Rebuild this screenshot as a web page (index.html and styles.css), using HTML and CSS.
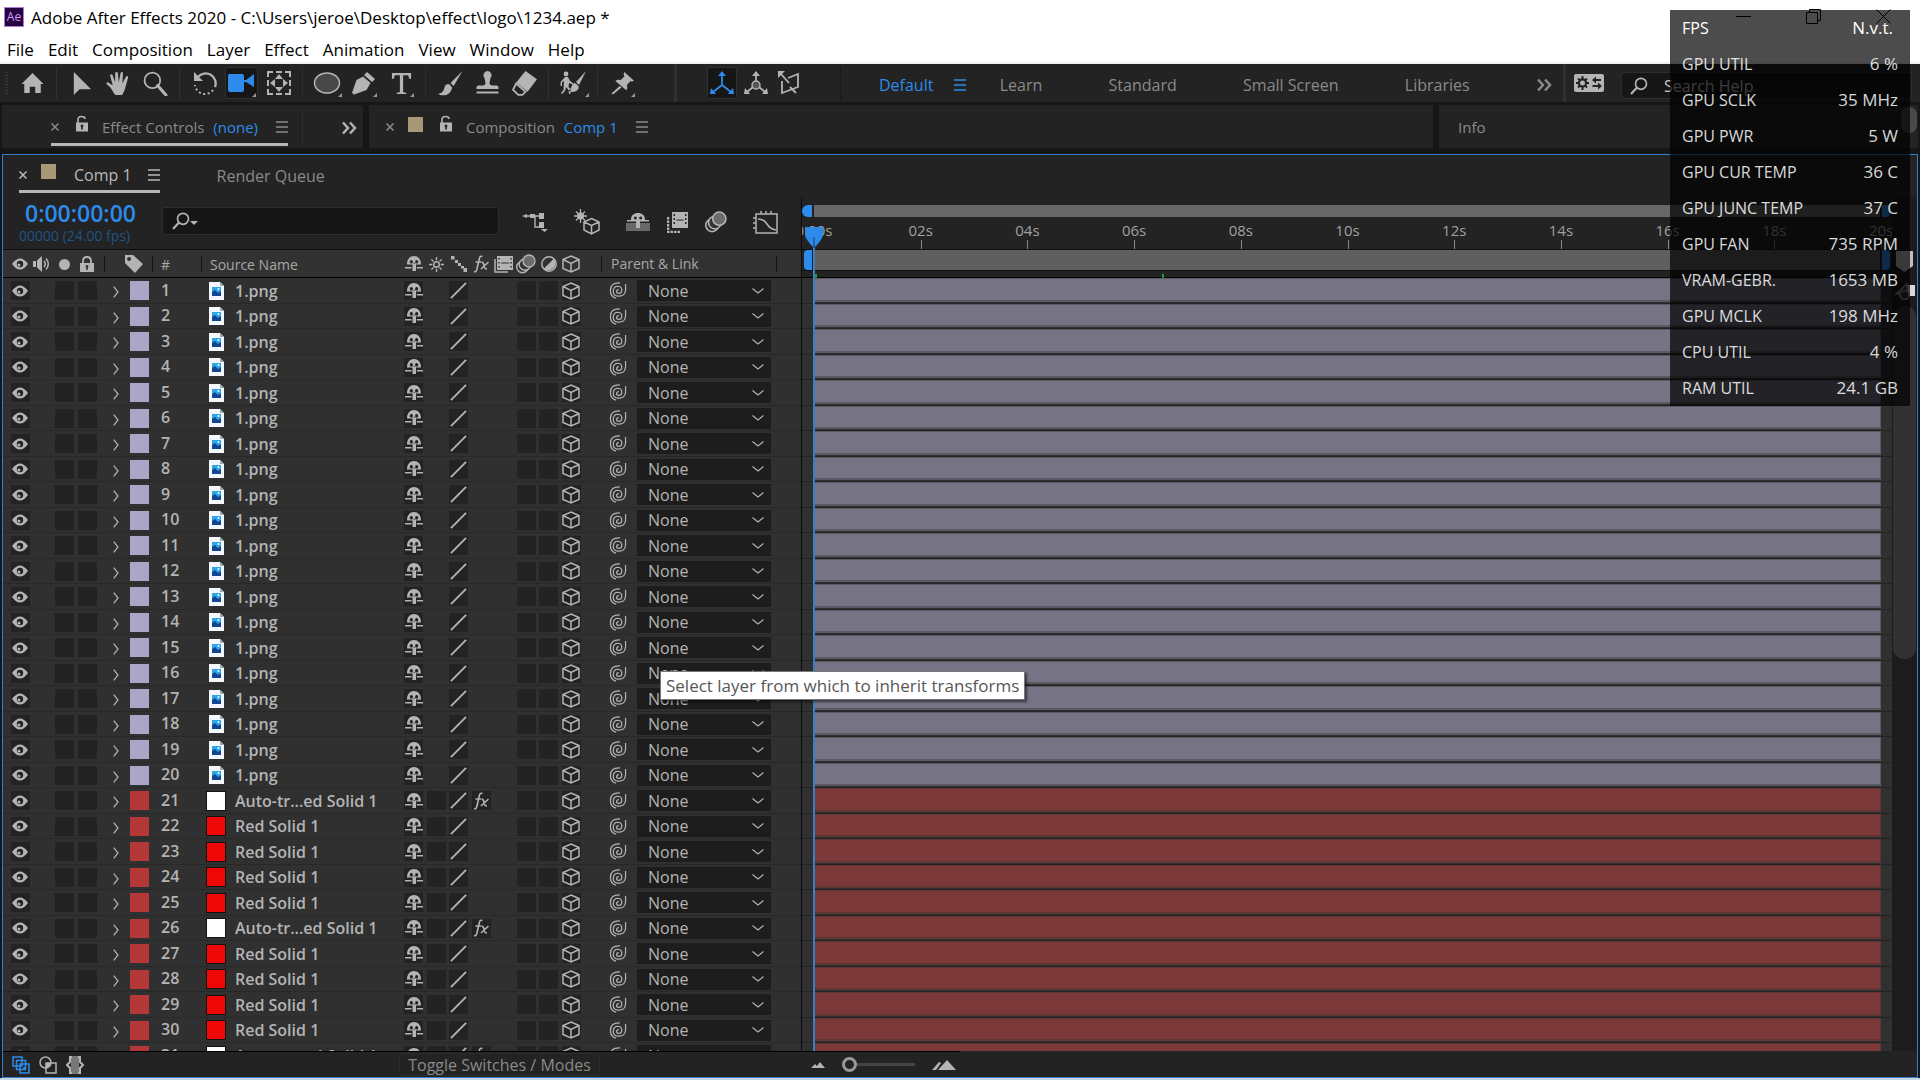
FILE: index.html
```html
<!DOCTYPE html>
<html lang="en">
<head>
    <meta charset="UTF-8">
    <meta name="viewport" content="width=device-width, initial-scale=1.0">
    <title>Adobe After Effects 2020</title>
    <link rel="stylesheet" href="styles.css">
</head>
<body>
    <!-- icon sprite -->
    <svg class="sprite" aria-hidden="true">
        <symbol id="i-home" viewBox="0 0 24 24"><path d="M12 1L0 13h3v10h6v-7h6v7h6V13h3z"/></symbol>
        <symbol id="i-arrow" viewBox="0 0 24 24"><path d="M4 0v24l6-6h12z"/></symbol>
        <symbol id="i-hand" viewBox="0 0 24 24"><path d="M9 23c-2-2-3-5-5-7.500L.6 12.400c-.6-1 .8-2 2-1.200L6.500 14 4 4.500c-.3-1.700 1.800-2 2.300-.6l2.400 7L8.900 2c.2-1.500 2.300-1.500 2.500 0l.8 9 1.800-9c.5-1.500 2.400-1.100 2.300.4L15.700 12l3.400-6.600c.8-1.300 2.600-.4 2.100 1L18.500 16c-.7 3-2 5-3 7z"/></symbol>
        <symbol id="i-zoom" viewBox="0 0 24 24"><circle cx="9" cy="9" r="7.500" fill="none" stroke="currentColor" stroke-width="1.700"/><path d="M14 14l8 9" stroke="currentColor" stroke-width="3" stroke-linecap="round"/></symbol>
        <symbol id="i-rotate" viewBox="0 0 24 24"><path d="M5 6A10 10 0 0 1 22 16" fill="none" stroke="currentColor" stroke-width="2.300"/><path d="M1 1v9h9z"/><path d="M20 19A10 10 0 0 1 2 14" fill="none" stroke="currentColor" stroke-width="2" stroke-dasharray="2 2.500"/></symbol>
        <symbol id="i-camera" viewBox="0 0 28 24"><path d="M2 3h13q2 0 2 2v4h2l8-6v13l-8-5h-2v8q0 2-2 2H3q-2 0-2-2V5q0-2 1-2z"/></symbol>
        <symbol id="i-pan" viewBox="0 0 24 24"><path d="M1 6V1h5M9 1h6M18 1h5v5M23 9v6M23 18v5h-5M15 23H9M6 23H1v-5M1 15V9" fill="none" stroke="currentColor" stroke-width="2"/><path d="M12 3l4 5H8zM12 21l4-5H8zM3 12l5-4v8zM21 12l-5-4v8z"/></symbol>
        <symbol id="i-ellipse" viewBox="0 0 28 24"><ellipse cx="14" cy="12" rx="12.500" ry="10" fill="#484848" stroke="currentColor" stroke-width="1.500"/></symbol>
        <symbol id="i-pen" viewBox="0 0 24 24"><path d="M15 1l8 7-3 3-8-7zM11 5.500l7.500 6.500-4 7L1 24l8-9a2 2 0 1 1 1 1l-8.500 7L0 22 4.500 9z"/></symbol>
        <symbol id="i-type" viewBox="0 0 24 24"><path d="M2 1h20v6h-2l-1-3.500h-5.300V21l3.300.6V23H7v-1.400l3.300-.6V3.500H5L4 7H2z"/></symbol>
        <symbol id="i-brush" viewBox="0 0 24 24"><path d="M23.500 0L12 11.500l3 3zM10.500 12.500c-3 0-4 1.500-4.500 4S3.500 21.500 0 22c3 2 8 2 11-1 2-2 2.500-4.500 2.500-5.500z"/></symbol>
        <symbol id="i-stamp" viewBox="0 0 24 24"><path d="M12 0a4.200 4.200 0 0 1 3 7l-1 5q0 2 3 2.500h4q2 0 2 2V18H1v-1.500q0-2 2-2h4Q10 14 10 12L9 7a4.200 4.200 0 0 1 3-7zM1 20.500h22v2H1z"/></symbol>
        <symbol id="i-eraser" viewBox="0 0 24 24"><path d="M13 0l11 8-9 12L4 11z"/><path d="M4 12l9 8-3 3H6l-5-5z" fill="none" stroke="currentColor" stroke-width="1.700"/></symbol>
        <symbol id="i-roto" viewBox="0 0 26 24"><circle cx="6" cy="3" r="2.400"/><path d="M5 6h3l2 4 3 2v1.500L9 12l-.5 4 2 2v5h-1.500l-.5-4L6 16l-1 4-3 3-1-1 2.500-3 .5-9-2 1.500V15H.6v-4zM26 0L16 11l3 3zM15 12c-3 .5-3 3-4 5-.6 1.600-1.500 2-3 2.500 3 2 7 2 9.500-.5 1-1 1.500-2.500 1-4z"/></symbol>
        <symbol id="i-pin" viewBox="0 0 24 24"><path d="M14 0l10 9-2 1-2-.3-3.500 4c1 2 .5 4-.5 5.300L4.500 9.500C6.500 8 8.500 8 10 8.500l4-4-.8-2.500zM9 14.500l2 1.700L2 23.500l-1.500-1z"/></symbol>
        <symbol id="i-axis-local" viewBox="0 0 24 24"><path d="M12 4v10L3 21M12 14l9 7" fill="none" stroke="currentColor" stroke-width="1.800"/><path d="M12 0l4 5H8zM0 23l1-6 5 6zM24 23l-1-6-5 6z"/></symbol>
        <symbol id="i-axis-world" viewBox="0 0 24 24"><path d="M12 4v8M9 16l-6 5M15 16l6 5" fill="none" stroke="currentColor" stroke-width="1.800"/><circle cx="12" cy="14" r="4" fill="#555" stroke="currentColor" stroke-width="1.500"/><path d="M12 0l4 5H8zM0 23l1-6 5 6zM24 23l-1-6-5 6z"/></symbol>
        <symbol id="i-axis-view" viewBox="0 0 24 24"><path d="M4 10v12l16-6V3l-10 4M3 3l8 9M12 16l6 6" fill="none" stroke="currentColor" stroke-width="1.800"/><path d="M0 0h7L0 7z"/></symbol>
        <symbol id="i-burger" viewBox="0 0 12 12"><path d="M0 1h12M0 6h12M0 11h12" stroke="currentColor" stroke-width="1.500"/></symbol>
        <symbol id="i-more" viewBox="0 0 16 14"><path d="M2 1.500l5 5.500-5 5.500M9 1.500l5 5.500-5 5.500" fill="none" stroke="currentColor" stroke-width="2.500"/></symbol>
        <symbol id="i-settings" viewBox="0 0 30 18"><rect width="30" height="18" rx="2"/><circle cx="8.500" cy="9" r="3.600" fill="none" stroke="#232323" stroke-width="2.200"/><path d="M8.500 2v3M8.500 13v3M2 9h3M12 9h3M4 4.500l2 2M11 11.500l2 2M13 4.500l-2 2M6 11.500l-2 2" stroke="#232323" stroke-width="2"/><path d="M20 6h7M18.500 12h7" stroke="#232323" stroke-width="2"/><path d="M22 2.500v7L18 6zM24 8.500v7l4-3.500z" fill="#232323"/></symbol>
        <symbol id="i-search" viewBox="0 0 18 18"><circle cx="11" cy="6.800" r="5.500" fill="none" stroke="currentColor" stroke-width="1.700"/><path d="M7 10.500L1 17" stroke="currentColor" stroke-width="2.200"/></symbol>
        <symbol id="i-close" viewBox="0 0 8 8"><path d="M.5.5l7 7M7.500.5l-7 7" stroke="currentColor" stroke-width="1.500"/></symbol>
        <symbol id="i-unlock" viewBox="0 0 14 16"><path d="M3 8V4q0-3 3.500-3T10 3.500" fill="none" stroke="currentColor" stroke-width="1.600"/><path fill-rule="evenodd" d="M1 7h12v9H1zM7 9a1.500 1.500 0 0 0-.8 2.700V14h1.600v-2.300A1.500 1.500 0 0 0 7 9z"/></symbol>
        <symbol id="i-lock" viewBox="0 0 14 16"><path d="M3 8V5q0-4 4-4t4 4v3" fill="none" stroke="currentColor" stroke-width="1.800"/><path fill-rule="evenodd" d="M0 7h14v9H0zM7 9a1.500 1.500 0 0 0-.8 2.700V14h1.600v-2.300A1.500 1.500 0 0 0 7 9z"/></symbol>
        <symbol id="i-eye" viewBox="0 0 16 12"><path d="M0 6q8-11 16 0-8 11-16 0z"/><circle cx="8" cy="6" r="3.200" fill="#232323"/><circle cx="7" cy="7" r="1.500"/></symbol>
        <symbol id="i-audio" viewBox="0 0 18 16"><path d="M0 5h3v6H0zM4 4.500L9 0v16l-5-4.500z"/><path d="M11 5q2.500 3 0 6M13 2.500q4.500 5.500 0 11" fill="none" stroke="currentColor" stroke-width="1.500"/></symbol>
        <symbol id="i-tag" viewBox="0 0 18 18"><path fill-rule="evenodd" d="M0 0h8l10 9-8 9L0 8zM4 2a2 2 0 1 0 .1 0z"/></symbol>
        <symbol id="i-shy" viewBox="0 0 18 16"><path fill-rule="evenodd" d="M2 8.500C2 3 5 0 9 0s7 3 7 8.500h-5V15H7.500V8.500zM6.300 4a1.600 1.800 0 1 0 .1 0zM11.600 4a1.600 1.800 0 1 0 .1 0zM8.500 8l.7-1.500.7 1.500z"/><path d="M0 11.700h6.500M11.800 11.700H18" stroke="currentColor" stroke-width="1.600"/></symbol>
        <symbol id="i-sun" viewBox="0 0 16 16"><circle cx="8" cy="8" r="3" fill="none" stroke="currentColor" stroke-width="1.500"/><path d="M8 0v3.500M8 12.500V16M0 8h3.500M12.500 8H16M2.500 2.500l2.300 2.300M11.200 11.200l2.300 2.300M13.500 2.500l-2.300 2.300M4.800 11.200l-2.300 2.300" stroke="currentColor" stroke-width="1.400"/></symbol>
        <symbol id="i-steps" viewBox="0 0 16 16"><path d="M0 0h3.500v3.500H0zM4 4h3v3H4zM7 7h3v3H7zM10 10h3v2.500h-3zM12.500 12H16v4h-3.500z"/></symbol>
        <symbol id="i-fx" viewBox="0 0 17 18"><path d="M1 16.500q2 1 2.800-2L6.500 3Q7.200.5 9.500 1.500M2.500 7h5.500M8.500 7q2 0 2.500 3.500t3 3.500M15.500 7l-7.500 7" fill="none" stroke="currentColor" stroke-width="1.600"/></symbol>
        <symbol id="i-film" viewBox="0 0 19 17"><path d="M1 3v13h13" fill="none" stroke="currentColor" stroke-width="1.500"/><path fill-rule="evenodd" d="M3 0h16v14H3zM4.200 2v1.500h1.500V2zM4.200 6v1.500h1.500V6zM4.200 10v1.500h1.500V10zM16.300 2v1.500h1.500V2zM16.300 6v1.500h1.500V6zM16.300 10v1.500h1.500V10zM7 6.500v1h8v-1z"/></symbol>
        <symbol id="i-blur" viewBox="0 0 20 20"><g stroke="currentColor" stroke-width="1.400" fill="#323232"><circle cx="6.500" cy="13" r="5.800"/><circle cx="9" cy="10.500" r="5.800"/><circle cx="13" cy="7" r="6" fill="#6c6c6c"/></g></symbol>
        <symbol id="i-adjust" viewBox="0 0 16 16"><circle cx="8" cy="8" r="7.200" fill="none" stroke="currentColor" stroke-width="1.500"/><path d="M13 2.500L2.500 13A7.500 7.500 0 0 0 13 2.500z"/></symbol>
        <symbol id="i-cube" viewBox="0 0 18 18"><path d="M9 1l8 3.500v9L9 17l-8-3.500v-9zM1 4.500L9 8.500l8-4M9 8.500V17" fill="none" stroke="currentColor" stroke-width="1.500"/></symbol>
        <symbol id="i-quality" viewBox="0 0 18 18"><path d="M1 17L17 1" stroke="currentColor" stroke-width="2"/></symbol>
        <symbol id="i-twirl" viewBox="0 0 6 12"><path d="M.7.7L5 6 .7 11.300" fill="none" stroke="currentColor" stroke-width="1.200"/></symbol>
        <symbol id="i-down" viewBox="0 0 12 6"><path d="M.5.5L6 5 11.500.5" fill="none" stroke="currentColor" stroke-width="1.100"/></symbol>
        <symbol id="i-pickwhip" viewBox="0 0 18 18"><path d="M10 8Q7.500 8 7.500 10t2.500 2q3 0 3-3.500T9 4.500Q4 4.500 4 10q0 4.500 5 5 7 .5 8-6V2M11 1Q1 .5 1 9q0 7 6 8" fill="none" stroke="currentColor" stroke-width="1.300"/></symbol>
        <symbol id="i-png" viewBox="0 0 15 18"><path d="M0 0h11l4 4v14H0z" fill="#f4f8fc"/><path d="M11 0v4h4z" fill="#9aa"/><path d="M3 5h9v9H3z" fill="#2da5e8"/><path d="M3 10l3-2 3 3 3-2v5H3z" fill="#12468e"/><circle cx="9.500" cy="7" r="1" fill="#fff"/></symbol>
        <symbol id="i-flow" viewBox="0 0 26 20"><path d="M2 4h20M13 4v11h4" fill="none" stroke="currentColor" stroke-width="1.400"/><path d="M0 4l5-2v4zM8 2h5v4H8zM17 1h5v6h-5zM17 10h5v6h-5zM19 17h7l-3.500 3z"/></symbol>
        <symbol id="i-draft" viewBox="0 0 26 26"><circle cx="6.500" cy="7" r="3.500"/><path d="M6.500 0v14M0 7h13M2 2.500l9 9M11 2.500l-9 9" stroke="currentColor" stroke-width="1.300"/><path d="M17.500 9.500l7.500 3.500v8l-7.500 4-7.500-4v-8z" fill="#232323"/><path d="M17.500 9.500l7.500 3.500v8l-7.500 4-7.500-4v-8zM10 13l7.500 3.500L25 13M17.500 16.500V25" fill="none" stroke="currentColor" stroke-width="1.500"/></symbol>
        <symbol id="i-hideshy" viewBox="0 0 24 20"><path d="M0 11h24v8H0z" fill="#686868"/><path fill-rule="evenodd" d="M5 8C5 3 8 1 12 1s7 2 7 7h4v1.600h-9V16h-4V9.600H1V8zM9.300 4.500a1.500 1.500 0 1 0 .1 0zM14.600 4.500a1.500 1.500 0 1 0 .1 0z"/></symbol>
        <symbol id="i-blend" viewBox="0 0 21 21"><path d="M1 5v15h13" fill="none" stroke="currentColor" stroke-width="2.500" stroke-dasharray="2.500 1"/><path fill-rule="evenodd" d="M5 0h16v16H5zM6.500 2v2H8V2zM6.500 6v2H8V6zM6.500 10v2H8v-2zM18 2v2h1.500V2zM18 6v2h1.500V6zM18 10v2h1.500v-2zM9.500 7.500v1h7v-1z"/></symbol>
        <symbol id="i-graph" viewBox="0 0 25 23"><path d="M3 3h21v19H3zM0 7h3M0 12h3M0 17h3M8 0v3M13 0v3M18 0v3M5 8q6 0 9 5t9 6" fill="none" stroke="currentColor" stroke-width="1.500"/></symbol>
        <symbol id="i-panes" viewBox="0 0 18 18"><path d="M1 1h9v9H1zM4.500 4.500h9v9h-9zM8 8h9v9H8z" fill="#232323" stroke="currentColor" stroke-width="1.500"/><circle cx="12.500" cy="12.500" r="1.400"/></symbol>
        <symbol id="i-modes" viewBox="0 0 18 18"><circle cx="6.500" cy="6.500" r="5.500" fill="none" stroke="currentColor" stroke-width="1.500"/><path d="M7 7h10v10H7z" fill="none" stroke="currentColor" stroke-width="1.500"/><path d="M7 7h5q-.5 4-5 5z"/></symbol>
        <symbol id="i-inout" viewBox="0 0 18 18"><path d="M5 0h8v18H5z" fill="#787878"/><path d="M6 1H4v5L1 9l3 3v5h2M12 1h2v5l3 3-3 3v5h-2" fill="none" stroke="currentColor" stroke-width="2"/></symbol>
        <symbol id="i-hills-sm" viewBox="0 0 14 6"><path d="M0 6l4-4 2 2 3-4 5 6z"/></symbol>
        <symbol id="i-hills-lg" viewBox="0 0 24 10"><path d="M0 10l7-8 2 1-5 7zM6 10l9-10 9 10z"/></symbol>
    </svg>

    <header class="titlebar">
        <div class="title">
            <span class="app-logo">Ae</span>
            <span>Adobe After Effects 2020 - C:\Users\jeroe\Desktop\effect\logo\1234.aep *</span>
        </div>
        <div class="window-controls">
            <button aria-label="Minimize"><svg width="15" height="15" viewBox="0 0 15 15"><path d="M0 7.500h15" stroke="#000"/></svg></button>
            <button aria-label="Restore"><svg width="15" height="15" viewBox="0 0 15 15"><path d="M.5 3.500h11v11H.5zM3.500 3.500v-3h11v11h-3" fill="none" stroke="#000"/></svg></button>
            <button aria-label="Close"><svg width="15" height="15" viewBox="0 0 15 15"><path d="M.5.5l14 14M14.500.5l-14 14" stroke="#000"/></svg></button>
        </div>
    </header>

    <nav class="menubar">
        <a href="#">File</a><a href="#">Edit</a><a href="#">Composition</a><a href="#">Layer</a><a href="#">Effect</a><a href="#">Animation</a><a href="#">View</a><a href="#">Window</a><a href="#">Help</a>
    </nav>

    <main class="app">
        <div class="toolbar">
            <span class="grip"></span>
            <button class="tool" aria-label="Home"><svg width="25" height="22"><use href="#i-home"/></svg></button>
            <span class="sep"></span>
            <button class="tool" aria-label="Selection"><svg width="23" height="25"><use href="#i-arrow"/></svg></button>
            <button class="tool" aria-label="Hand"><svg width="25" height="25"><use href="#i-hand"/></svg></button>
            <button class="tool" aria-label="Zoom"><svg width="25" height="25"><use href="#i-zoom"/></svg></button>
            <span class="sep"></span>
            <button class="tool" aria-label="Rotation"><svg width="24" height="24"><use href="#i-rotate"/></svg></button>
            <button class="tool flyout active" aria-label="Camera"><svg width="28" height="24"><use href="#i-camera"/></svg></button>
            <button class="tool" aria-label="Pan behind"><svg width="24" height="24"><use href="#i-pan"/></svg></button>
            <span class="sep"></span>
            <button class="tool flyout" aria-label="Ellipse"><svg width="28" height="24"><use href="#i-ellipse"/></svg></button>
            <button class="tool flyout" aria-label="Pen"><svg width="24" height="24"><use href="#i-pen"/></svg></button>
            <button class="tool flyout" aria-label="Type"><svg width="23" height="23"><use href="#i-type"/></svg></button>
            <span class="sep"></span>
            <button class="tool" aria-label="Brush"><svg width="25" height="25"><use href="#i-brush"/></svg></button>
            <button class="tool" aria-label="Clone stamp"><svg width="25" height="24"><use href="#i-stamp"/></svg></button>
            <button class="tool" aria-label="Eraser"><svg width="25" height="25"><use href="#i-eraser"/></svg></button>
            <span class="sep"></span>
            <button class="tool flyout" aria-label="Roto brush"><svg width="30" height="24"><use href="#i-roto"/></svg></button>
            <span class="sep"></span>
            <button class="tool flyout" aria-label="Puppet pin"><svg width="23" height="23"><use href="#i-pin"/></svg></button>
            <span class="sep-wide after-tools"></span>
            <div class="axes">
                <button class="tool active" aria-label="Local axis"><svg width="24" height="24"><use href="#i-axis-local"/></svg></button>
                <button class="tool" aria-label="World axis"><svg width="24" height="24"><use href="#i-axis-world"/></svg></button>
                <button class="tool" aria-label="View axis"><svg width="24" height="24"><use href="#i-axis-view"/></svg></button>
            </div>
            <nav class="workspaces">
                <a href="#" class="current">Default <svg width="12" height="12"><use href="#i-burger"/></svg></a>
                <a href="#">Learn</a>
                <a href="#">Standard</a>
                <a href="#">Small Screen</a>
                <a href="#">Libraries</a>
                <button class="icon-btn" aria-label="More workspaces"><svg width="16" height="14"><use href="#i-more"/></svg></button>
            </nav>
            <span class="sep-wide"></span>
            <button class="icon-btn sync" aria-label="Workspace settings"><svg width="30" height="18"><use href="#i-settings"/></svg></button>
            <label class="search search-help">
                <svg width="18" height="18"><use href="#i-search"/></svg>
                <input type="text" placeholder="Search Help" aria-label="Search Help">
            </label>
        </div>

        <div class="tabstrip">
            <section class="tabs tabs-effects">
                <div class="tab open">
                    <button class="icon-btn" aria-label="Close"><svg width="8" height="8"><use href="#i-close"/></svg></button>
                    <svg class="lock" width="14" height="17"><use href="#i-unlock"/></svg>
                    <span class="tab-name">Effect Controls <b>(none)</b></span>
                    <svg width="12" height="12"><use href="#i-burger"/></svg>
                </div>
                <button class="icon-btn more" aria-label="More tabs"><svg width="16" height="14"><use href="#i-more"/></svg></button>
            </section>
            <section class="tabs tabs-comp">
                <button class="icon-btn" aria-label="Close"><svg width="8" height="8"><use href="#i-close"/></svg></button>
                <span class="swatch"></span>
                <svg class="lock" width="14" height="17"><use href="#i-unlock"/></svg>
                <span class="tab-name">Composition <b>Comp 1</b></span>
                <svg width="12" height="12"><use href="#i-burger"/></svg>
            </section>
            <section class="tabs tabs-info">
                <span>Info</span>
                <span class="info-thumb"></span>
            </section>
        </div>

        <section class="timeline">
            <div class="timeline-tabs">
                <div class="tab open">
                    <button class="icon-btn" aria-label="Close"><svg width="8" height="8"><use href="#i-close"/></svg></button>
                    <span class="swatch"></span>
                    <span class="tab-name">Comp 1</span>
                    <svg width="12" height="12"><use href="#i-burger"/></svg>
                </div>
                <a href="#">Render Queue</a>
            </div>

            <div class="timeline-body">
                <div class="layers">
                    <div class="layer-tools">
                        <div class="time">
                            <span class="timecode">0:00:00:00</span>
                            <span class="frames">00000 (24.00 fps)</span>
                        </div>
                        <label class="search layer-search">
                            <svg width="18" height="18"><use href="#i-search"/></svg>
                            <span class="caret"></span>
                            <input type="text" aria-label="Search layers">
                        </label>
                        <div class="comp-buttons">
                            <button class="icon-btn" aria-label="Mini flowchart"><svg width="26" height="20"><use href="#i-flow"/></svg></button>
                            <button class="icon-btn" aria-label="Draft 3D"><svg width="26" height="26"><use href="#i-draft"/></svg></button>
                            <div class="switch-buttons">
                                <button class="icon-btn" aria-label="Hide shy layers"><svg width="24" height="20"><use href="#i-hideshy"/></svg></button>
                                <button class="icon-btn" aria-label="Frame blending"><svg width="21" height="21"><use href="#i-blend"/></svg></button>
                                <button class="icon-btn" aria-label="Motion blur"><svg width="22" height="22"><use href="#i-blur"/></svg></button>
                            </div>
                            <button class="icon-btn" aria-label="Graph editor"><svg width="25" height="23"><use href="#i-graph"/></svg></button>
                        </div>
                    </div>

                    <div class="layer-scroll">
                    <table class="layer-table">
                        <colgroup>
                            <col class="c-switch"><col class="c-switch"><col class="c-switch"><col class="c-lock">
                            <col class="c-twirl"><col class="c-twirl"><col class="c-num"><col class="c-name">
                            <col class="c-odd"><col class="c-switch"><col class="c-odd"><col class="c-switch">
                            <col class="c-odd"><col class="c-switch"><col class="c-odd"><col class="c-switch">
                            <col class="c-parent">
                        </colgroup>
                        <thead>
                            <tr>
                                <th><svg width="16" height="12"><use href="#i-eye"/></svg></th>
                                <th><svg width="18" height="16"><use href="#i-audio"/></svg></th>
                                <th><span class="dot"></span></th>
                                <th class="h-lock"><svg width="14" height="16"><use href="#i-lock"/></svg></th>
                                <th class="h-tag" colspan="2"><svg width="18" height="18"><use href="#i-tag"/></svg></th>
                                <th class="h-num">#</th>
                                <th class="h-name">Source Name</th>
                                <th><svg width="18" height="16"><use href="#i-shy"/></svg></th>
                                <th><svg width="15" height="15"><use href="#i-sun"/></svg></th>
                                <th><svg width="16" height="16"><use href="#i-steps"/></svg></th>
                                <th><svg width="17" height="18"><use href="#i-fx"/></svg></th>
                                <th><svg width="19" height="17"><use href="#i-film"/></svg></th>
                                <th><svg width="20" height="20"><use href="#i-blur"/></svg></th>
                                <th><svg width="16" height="16"><use href="#i-adjust"/></svg></th>
                                <th><svg width="18" height="18"><use href="#i-cube"/></svg></th>
                                <th class="h-parent"><span>Parent &amp; Link</span></th>
                            </tr>
                        </thead>
                        <tbody id="layer-rows"></tbody>
                    </table>
                    </div>
                </div>

                <div class="time-area">
                    <div class="time-head">
                        <div class="navigator"><i></i><span></span><i class="end"></i></div>
                        <div class="ruler" id="ruler"></div>
                        <div class="work-area"><i></i><span></span><i class="end"></i></div>
                        <div class="cache"><i class="cache-start"></i><i></i></div>
                    </div>
                    <div class="tracks" id="tracks"></div>
                    <div class="gutter">
                        <svg width="17" height="21" viewBox="0 0 17 21"><path d="M0 0h17v15l-8.500 6L0 15z" fill="#c0c0c0"/></svg>
                        <svg width="20" height="17" viewBox="0 0 20 17"><path d="M13 2h7v11h-7z" fill="#d8d8d8"/><path d="M1 11L12 1v8zM9 7l3 4" fill="none" stroke="#999" stroke-width="1.500"/><circle cx="9.500" cy="12" r="4.500" fill="#303030" stroke="#999" stroke-width="1.500"/></svg>
                        <span class="scroll-thumb"></span>
                    </div>
                    <div class="playhead"><svg width="18" height="21" viewBox="0 0 18 21"><path d="M0 0h18v8q-1 5-9 13Q1 13 0 8z" fill="#2d8ceb"/><path d="M9 10v11" stroke="#14395f"/></svg></div>
                </div>
            </div>

            <footer class="timeline-footer">
                <div class="pane-buttons">
                    <button class="icon-btn on" aria-label="Layer switches"><svg width="18" height="18"><use href="#i-panes"/></svg></button>
                    <button class="icon-btn" aria-label="Transfer controls"><svg width="18" height="18"><use href="#i-modes"/></svg></button>
                    <button class="icon-btn" aria-label="In and out"><svg width="18" height="18"><use href="#i-inout"/></svg></button>
                </div>
                <button class="toggle-modes">Toggle Switches / Modes</button>
                <div class="time-zoom">
                    <svg width="14" height="6"><use href="#i-hills-sm"/></svg>
                    <input type="range" min="0" max="100" value="0" aria-label="Time zoom">
                    <svg width="24" height="10"><use href="#i-hills-lg"/></svg>
                </div>
            </footer>
        </section>
    </main>

    <div class="tooltip" role="tooltip">Select layer from which to inherit transforms</div>

    <dl class="stats">
        <div><dt>FPS</dt><dd>N.v.t.</dd></div>
        <div><dt>GPU UTIL</dt><dd>6 %</dd></div>
        <div><dt>GPU SCLK</dt><dd>35 MHz</dd></div>
        <div><dt>GPU PWR</dt><dd>5 W</dd></div>
        <div><dt>GPU CUR TEMP</dt><dd>36 C</dd></div>
        <div><dt>GPU JUNC TEMP</dt><dd>37 C</dd></div>
        <div><dt>GPU FAN</dt><dd>735 RPM</dd></div>
        <div><dt>VRAM-GEBR.</dt><dd>1653 MB</dd></div>
        <div><dt>GPU MCLK</dt><dd>198 MHz</dd></div>
        <div><dt>CPU UTIL</dt><dd>4 %</dd></div>
        <div><dt>RAM UTIL</dt><dd>24.1 GB</dd></div>
    </dl>

    <script src="script.js"></script>
</body>
</html>
```
FILE: styles.css
```css
* {
    box-sizing: border-box;
}
body {
    margin: 0;
    height: 100vh;
    display: flex;
    flex-direction: column;
    overflow: hidden;
    background-color: #c9d6e4;
    color: #b4b4b4;
    font-family: "Open Sans", "Noto Sans", sans-serif;
    font-size: 15px;
}
svg {
    display: block;
    fill: currentColor;
    flex: none;
}
a {
    color: inherit;
    text-decoration: none;
}
button {
    padding: 0;
    border: 0;
    background: none;
    color: inherit;
    font: inherit;
}
.sprite {
    position: absolute;
    width: 0;
    height: 0;
}

/* window frame */
.titlebar {
    height: 34px;
    display: flex;
    justify-content: space-between;
    background-color: #fff;
    color: #000;
    font-size: 17px;
}
.title {
    display: flex;
    align-items: center;
    gap: 7px;
    padding-left: 4px;
}
.app-logo {
    width: 20px;
    height: 20px;
    border: 1px solid #b07ad6;
    background-color: #23043f;
    color: #d79bff;
    font-size: 12px;
    line-height: 17px;
    text-align: center;
}
.window-controls {
    display: flex;
    gap: 55px;
    padding: 9px 29px 0 0;
    align-items: flex-start;
}
.menubar {
    height: 30px;
    display: flex;
    gap: 14px;
    padding-left: 7px;
    background-color: #fff;
    border-bottom: 2px solid #f0f0f0;
    color: #000;
    font-size: 17px;
    line-height: 31px;
}
.app {
    flex: 1;
    min-height: 0;
    display: flex;
    flex-direction: column;
    margin-bottom: 2px;
    background-color: #161616;
}

/* tools */
.toolbar {
    height: 38px;
    display: flex;
    align-items: center;
    padding-left: 5px;
    padding-right: 8px;
    background-color: #232323;
}
.grip {
    width: 3px;
    height: 22px;
    margin-right: 6px;
    background: repeating-linear-gradient(#3a3a3a 0 1px, #232323 1px 3px);
}
.tool {
    width: 37px;
    height: 32px;
    display: flex;
    align-items: center;
    justify-content: center;
}
.tool.active {
    width: 33px;
    margin: 0 2px;
    border: 1px solid #303030;
    border-radius: 3px;
    background-color: #161616;
    color: #2d8ceb;
}
.flyout::after {
    content: "";
    width: 0;
    margin: 24px 0 0 -3px;
    border: 2px solid #999;
    border-top-color: transparent;
    border-left-color: transparent;
}
.sep {
    width: 1px;
    height: 32px;
    margin: 0 6px 0 5px;
    background-color: #2f2f2f;
}
.sep-wide {
    width: 3px;
    height: 38px;
    background-color: #303030;
}
.after-tools {
    margin-left: 33px;
}
.axes {
    display: flex;
    margin-left: 28px;
    padding-right: 33px;
    border-right: 1px solid #181818;
}
.axes .tool {
    width: 34px;
}
.axes .active {
    width: 30px;
}
.workspaces {
    flex: 1;
    display: flex;
    align-items: center;
    justify-content: space-between;
    padding: 4px 11px 0 38px;
    color: #8a8a8a;
    font-size: 16px;
}
.workspaces .current {
    display: flex;
    align-items: center;
    gap: 21px;
    margin-right: -33px;
    color: #2d8ceb;
}
.icon-btn {
    display: flex;
    align-items: center;
    justify-content: center;
}
.sync {
    margin: 0 17px 0 8px;
}
.search {
    display: flex;
    align-items: center;
    height: 28px;
    border: 1px solid #2e2e2e;
    border-radius: 3px;
    background-color: #161616;
}
.search input {
    flex: 1;
    min-width: 0;
    padding: 0;
    border: 0;
    background: none;
    color: #b4b4b4;
    font: inherit;
}
.search-help {
    width: 291px;
    height: 27px;
    margin-top: 5px;
    gap: 16px;
    padding-left: 8px;
    font-size: 16px;
}
.search-help input::placeholder {
    color: #c4c4c4;
    opacity: 1;
}

/* docked panel tabs */
.tabstrip {
    display: flex;
    gap: 6px;
    padding: 3px 2px 6px;
    color: #8a8a8a;
}
.tabs {
    height: 43px;
    display: flex;
    align-items: center;
    background-color: #232323;
}
.tabs b {
    margin-left: 5px;
    color: #2d8ceb;
    font-weight: 400;
}
.tab {
    display: flex;
    align-items: center;
}
.tab-name {
    margin-right: 18px;
}
.lock {
    margin: -6px 13px 0 16px;
    color: #b4b4b4;
}
.tabs-effects {
    width: 361px;
    padding: 3px 6px 0 49px;
    justify-content: space-between;
}
.tabs-effects .tab {
    height: 36px;
    border-bottom: 3px solid #b8b8b8;
}
.more {
    height: 36px;
    padding-left: 38px;
    border-left: 1px solid #2f2f2f;
    color: #b4b4b4;
}
.tabs-comp {
    flex: 1;
    padding-left: 17px;
}
.swatch {
    width: 15px;
    height: 15px;
    margin: -4px 0 0 14px;
    background-color: #a89878;
}
.tabs-info {
    width: 479px;
    justify-content: space-between;
    padding: 0 1px 0 19px;
}
.info-thumb {
    width: 16px;
    height: 26px;
    margin-top: -14px;
    border-radius: 8px;
    background-color: #4a4a4a;
}

/* timeline panel */
.timeline {
    flex: 1;
    min-height: 0;
    display: flex;
    flex-direction: column;
    margin: 0 2px;
    border: 1px solid #2f7fcb;
    background-color: #232323;
}
.timeline-tabs {
    height: 42px;
    display: flex;
    align-items: flex-start;
    padding-left: 16px;
    font-size: 16px;
    line-height: 42px;
    color: #8a8a8a;
}
.timeline-tabs .tab {
    height: 38px;
    padding-top: 5px;
    margin-right: 57px;
    border-bottom: 3px solid #b8b8b8;
    color: #b8b8b8;
}
.timeline-tabs .swatch {
    margin-top: -8px;
}
.timeline-tabs .tab-name {
    margin: 0 16px 0 18px;
}
.timeline-body {
    flex: 1;
    min-height: 0;
    display: grid;
    grid-template-columns: 799px 1fr;
}
.layers {
    min-height: 0;
    display: flex;
    flex-direction: column;
    overflow: hidden;
    border-right: 1px solid #0c0c0c;
}
.layer-tools {
    height: 52px;
    flex: none;
    display: flex;
    align-items: flex-start;
}
.time {
    width: 159px;
    display: flex;
    flex-direction: column;
    padding: 3px 0 0 16px;
    color: #1f5488;
    font-size: 14px;
    line-height: 20px;
    white-space: nowrap;
}
.timecode {
    padding-left: 6px;
    color: #2d8ceb;
    font-size: 23px;
    font-weight: 600;
    line-height: 26px;
}
.layer-search {
    width: 337px;
    margin-top: 10px;
    padding-left: 9px;
}
.caret {
    margin-top: 8px;
    border: 4px solid transparent;
    border-top-color: #b4b4b4;
}
.comp-buttons {
    flex: 1;
    height: 50px;
    display: flex;
    align-items: center;
    justify-content: space-between;
    padding: 0 23px;
}
.switch-buttons {
    display: flex;
    align-items: center;
    gap: 17px;
}

/* layer list */
.layer-scroll {
    flex: 1;
    min-height: 0;
    overflow: hidden;
    background-color: #303030;
}
.layer-table {
    width: 100%;
    table-layout: fixed;
    border-collapse: separate;
    border-spacing: 0;
}
.c-switch { width: 22px; }
.c-odd { width: 23px; }
.c-lock { width: 29px; }
.c-twirl { width: 24px; }
.c-num { width: 49px; }
.c-name { width: 201px; }
.layer-table th,
.layer-table td {
    padding: 0;
    vertical-align: middle;
}
.layer-table th {
    height: 29px;
    padding-top: 1px;
    border-top: 1px solid #0c0c0c;
    border-bottom: 1px solid #000;
    background-color: #323232;
    color: #a8a8a8;
    font-size: 14px;
    font-weight: 400;
    text-align: left;
}
.layer-table th svg {
    margin: 0 auto;
    color: #b4b4b4;
}
.layer-table tr > :first-child {
    padding-left: 6px;
}
.layer-table col:first-child {
    width: 28px;
}
.dot {
    display: block;
    width: 11px;
    height: 11px;
    margin: 0 auto;
    border-radius: 50%;
    background-color: #b4b4b4;
}
.layer-table .h-lock {
    padding-right: 6px;
}
.layer-table .h-tag {
    padding-left: 12px;
}
.layer-table .h-tag,
.layer-table .h-num,
.layer-table .h-name {
    background: linear-gradient(#151515, #151515) 0 6px / 1px 16px no-repeat #323232;
}
.layer-table .h-num,
.layer-table .h-name {
    padding-left: 9px;
}
.h-parent span {
    display: block;
    width: 176px;
    height: 16px;
    margin-left: 19px;
    padding-left: 9px;
    border-left: 1px solid #151515;
    border-right: 1px solid #151515;
    line-height: 16px;
}
.layer-table tbody tr {
    height: 26px;
}
.layer-table tbody tr:nth-child(even) {
    height: 25px;
}
.layer-table td {
    border-bottom: 1px solid #282828;
    color: #b4b4b4;
}
.cell {
    width: 19px;
    height: 19px;
    display: flex;
    align-items: center;
    justify-content: center;
    margin: 0 auto;
    background-color: #232323;
}
.cell-lock {
    margin: 0 0 0 3px;
}
.twirl {
    margin: 3px auto 0;
}
.label {
    display: block;
    width: 19px;
    height: 19px;
    margin-left: 2px;
    background-color: #aaa6c8;
}
.label.red {
    background-color: #b53838;
}
.layer-table .num {
    padding: 0 0 2px 9px;
    font-size: 16px;
    font-weight: 600;
    line-height: 20px;
}
.source {
    display: flex;
    align-items: center;
    padding-left: 5px;
    gap: 9px;
    font-size: 16px;
    font-weight: 600;
    line-height: 20px;
    white-space: nowrap;
}
.thumb {
    width: 20px;
    height: 20px;
    display: flex;
    justify-content: center;
    align-items: center;
}
.thumb.solid {
    border: 1px solid #111;
    background-color: #ee0808;
}
.thumb.white {
    background-color: #fff;
}
.link {
    display: flex;
    align-items: center;
    gap: 9px;
    padding-left: 26px;
}
.pick {
    width: 20px;
}
.dropdown {
    width: 134px;
    height: 21px;
    display: grid;
    align-items: center;
    background-color: #1d1d1d;
}
.dropdown select,
.dropdown svg {
    grid-area: 1 / 1;
}
.dropdown select {
    width: 100%;
    height: 21px;
    padding: 0 0 0 11px;
    appearance: none;
    border: 0;
    background: none;
    color: #b4b4b4;
    font: inherit;
    font-size: 16px;
    line-height: 20px;
}
.dropdown svg {
    justify-self: end;
    margin-right: 7px;
    pointer-events: none;
}

/* time ruler and tracks */
.time-area {
    position: relative;
    min-height: 0;
    display: grid;
    grid-template-columns: 1fr 25px;
    grid-template-rows: 81px 1fr;
}
.time-head {
    min-width: 0;
    padding-top: 8px;
    border-bottom: 1px solid #000;
}
.navigator,
.work-area {
    display: flex;
    padding: 0 2px 0 0;
}
.navigator i,
.work-area i {
    width: 10px;
    border-radius: 6px 0 0 6px;
    background-color: #2d8ceb;
}
.navigator .end,
.work-area .end {
    width: 8px;
    border-radius: 0 4px 4px 0;
}
.navigator span,
.work-area span {
    flex: 1;
    margin: 0 2px;
    background-color: #686868;
}
.navigator {
    height: 12px;
}
.work-area {
    height: 21px;
    padding-left: 2px;
    border-top: 1px solid #111;
}
.work-area i {
    width: 8px;
    border-radius: 4px 0 0 4px;
}
.work-area span {
    background-color: #5f5f5f;
}
.ruler {
    height: 32px;
    display: flex;
    overflow: hidden;
    padding: 0 11px 0 12px;
    font-size: 15px;
}
.mark {
    flex: 1;
    display: flex;
    flex-direction: column;
    justify-content: flex-end;
}
.mark:last-child {
    flex: none;
    width: 0;
}
.mark::after {
    content: "";
    width: 1px;
    height: 9px;
    background-color: #8a8a8a;
}
.mark span {
    width: 0;
    display: flex;
    justify-content: center;
    color: #a0a0a0;
    line-height: 20px;
}
.cache {
    height: 7px;
    display: flex;
    padding: 3px 11px 0 12px;
    border-top: 1px solid #111;
}
.cache i {
    width: 2px;
    height: 4px;
    background-color: #1f9a34;
}
.cache .cache-start {
    width: calc(33% - 4px);
    background: linear-gradient(#1f9a34, #1f9a34) 0 0 / 3px 4px no-repeat;
}
.tracks {
    grid-row: 2;
    min-height: 0;
    overflow: hidden;
    background-color: #303030;
}
.track {
    height: 26px;
    padding: 0 11px 1px 12px;
    border-bottom: 1px solid #242424;
}
.track:nth-child(even) {
    height: 25px;
}
.bar {
    height: 100%;
    border: solid #5b5a64;
    border-width: 1px 1px 2px 0;
    background-color: #757384;
}
.bar.red {
    border-color: #633636;
    background-color: #7b393a;
}
.gutter {
    grid-column: 2;
    grid-row: 1 / 3;
    display: flex;
    flex-direction: column;
    align-items: center;
    gap: 11px;
    padding-top: 54px;
    background-color: #1c1c1c;
}
.scroll-thumb {
    width: 23px;
    height: 353px;
    margin-top: -5px;
    border-radius: 11px;
    background-color: #323232;
}
.playhead {
    position: absolute;
    top: 30px;
    bottom: 0;
    left: 3px;
    background: linear-gradient(#3a7fc4, #3a7fc4) 8px 18px / 2px 100% no-repeat;
}

/* bottom strip */
.timeline-footer {
    height: 26px;
    display: flex;
    align-items: center;
    padding-top: 1px;
    background: linear-gradient(#000, #000) 0 0 / 50% 1px no-repeat;
    color: #8a8a8a;
    font-size: 16px;
}
.pane-buttons {
    width: 396px;
    display: flex;
    gap: 4px;
    padding-left: 6px;
    color: #b4b4b4;
}
.pane-buttons .icon-btn {
    width: 23px;
    height: 23px;
}
.pane-buttons .on {
    color: #2d8ceb;
}
.toggle-modes {
    width: 201px;
    height: 23px;
    border: 1px solid #2c2c2c;
    border-radius: 3px;
    line-height: 20px;
}
.time-zoom {
    display: flex;
    align-items: center;
    gap: 17px;
    margin-left: 211px;
    color: #b4b4b4;
}
.time-zoom input {
    width: 73px;
    height: 16px;
    margin: 0;
    appearance: none;
    background: linear-gradient(#444, #444) 0 6px / 100% 3px no-repeat;
}
.time-zoom input::-webkit-slider-thumb {
    width: 15px;
    height: 15px;
    appearance: none;
    border: 3px solid #999;
    border-radius: 50%;
    background-color: #232323;
}

/* floating windows */
.tooltip {
    position: absolute;
    top: 671px;
    left: 660px;
    padding: 0 5px;
    border: 1px solid #777;
    background-color: #fff;
    box-shadow: 2px 2px 2px rgba(0, 0, 0, 0.5);
    color: #575757;
    font-size: 17px;
    line-height: 27px;
}
.stats {
    position: absolute;
    top: 10px;
    right: 10px;
    width: 240px;
    margin: 0;
    background-color: rgba(0, 0, 0, 0.7);
    color: rgba(255, 255, 255, 0.85);
    font-size: 16px;
    line-height: 36px;
}
.stats div {
    height: 36px;
    display: flex;
    justify-content: space-between;
    padding: 0 12px;
}
.stats div:first-child {
    padding-right: 17px;
    color: #fff;
}
.stats dd {
    margin: 0;
    font-size: 17px;
}
```
FILE: script.js
```js
// layers 21, 26 and 31 are the auto-traced solids
const tracedSolids = [21, 26, 31];
const layers = [];
for (let i = 1; i <= 31; i++) {
    const solid = i > 20;
    const traced = tracedSolids.includes(i);
    layers.push({
        num: i,
        solid: solid,
        traced: traced,
        name: traced ? 'Auto-tr...ed Solid 1' : solid ? 'Red Solid 1' : '1.png'
    });
}

function icon(name, w, h) {
    return `<svg width="${w}" height="${h}"><use href="#i-${name}"/></svg>`;
}

function cell(label, content) {
    return `<button class="cell" aria-label="${label}">${content || ''}</button>`;
}

function layerRow(layer) {
    const thumb = layer.solid
        ? `<span class="thumb solid${layer.traced ? ' white' : ''}"></span>`
        : `<span class="thumb">${icon('png', 15, 18)}</span>`;
    return `<tr>
        <td>${cell('Video', icon('eye', 16, 12))}</td>
        <td></td>
        <td>${cell('Solo')}</td>
        <td><button class="cell cell-lock" aria-label="Lock"></button></td>
        <td><button class="icon-btn twirl" aria-label="Expand">${icon('twirl', 6, 12)}</button></td>
        <td><span class="label${layer.solid ? ' red' : ''}"></span></td>
        <td class="num">${layer.num}</td>
        <td><div class="source">${thumb}${layer.name}</div></td>
        <td>${cell('Shy', icon('shy', 18, 16))}</td>
        <td>${layer.solid ? cell('Collapse') : ''}</td>
        <td>${cell('Quality', icon('quality', 17, 17))}</td>
        <td>${layer.traced ? cell('Effects', icon('fx', 17, 18)) : ''}</td>
        <td></td>
        <td>${cell('Motion blur')}</td>
        <td>${cell('Adjustment layer')}</td>
        <td>${cell('3D layer', icon('cube', 18, 18))}</td>
        <td><div class="link">
            <button class="icon-btn pick" aria-label="Pick whip">${icon('pickwhip', 18, 17)}</button>
            <div class="dropdown"><select aria-label="Parent of layer ${layer.num}"><option>None</option></select>${icon('down', 12, 6)}</div>
        </div></td>
    </tr>`;
}

document.getElementById('layer-rows').innerHTML = layers.map(layerRow).join('');
document.getElementById('tracks').innerHTML = layers.map(layer =>
    `<div class="track"><div class="bar${layer.solid ? ' red' : ''}"></div></div>`).join('');

// a mark every two seconds
let marks = '';
for (let s = 0; s <= 20; s += 2) {
    const text = s === 0 ? '0:00s' : String(s).padStart(2, '0') + 's';
    marks += `<div class="mark"><span>${text}</span></div>`;
}
document.getElementById('ruler').innerHTML = marks;
```
